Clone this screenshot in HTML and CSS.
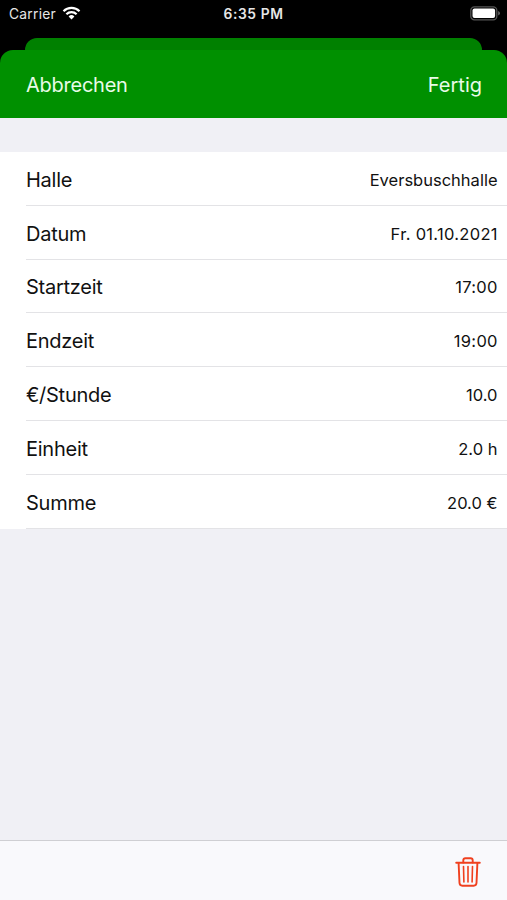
FILE: index.html
```
<!DOCTYPE html>
<html lang="de">
<head>
    <meta charset="UTF-8">
    <meta name="viewport" content="width=device-width, initial-scale=1">
    <title>Halle</title>
    <link rel="stylesheet" href="styles.css">
</head>
<body>

    <div class="statusbar">
        <div class="carrier">
            <span>Carrier</span>
            <svg class="wifi" viewBox="0 0 18 14" width="19" height="14">
                <path d="M1 5.2 A11.3 11.3 0 0 1 17 5.2" />
                <path d="M3.9 8.2 A7.2 7.2 0 0 1 14.1 8.2" />
                <path class="dot" d="M9 13.4 L6.1 10.4 A4.1 4.1 0 0 1 11.9 10.4 Z" />
            </svg>
        </div>
        <span class="clock">6:35 PM</span>
        <svg class="battery" viewBox="0 0 31 15" width="31" height="15">
            <rect class="case" x="0.8" y="0.8" width="26" height="13" rx="3.6" />
            <rect class="level" x="2.5" y="2.5" width="22.6" height="9.6" rx="2" />
            <path class="tip" d="M28.2 5 Q30 5.8 30 7.3 Q30 8.8 28.2 9.6 Z" />
        </svg>
    </div>

    <div class="sheet-behind"></div>

    <div class="sheet">
        <div class="navbar">
            <span class="cancel">Abbrechen</span>
            <span class="done">Fertig</span>
        </div>

        <div class="content">
            <div class="list">
                <div class="row"><span class="label">Halle</span><span class="value">Eversbuschhalle</span></div>
                <div class="row"><span class="label">Datum</span><span class="value zeit">Fr. 01.10.2021</span></div>
                <div class="row"><span class="label">Startzeit</span><span class="value zeit">17:00</span></div>
                <div class="row"><span class="label">Endzeit</span><span class="value zeit">19:00</span></div>
                <div class="row"><span class="label">€/Stunde</span><span class="value">10.0</span></div>
                <div class="row"><span class="label">Einheit</span><span class="value">2.0 h</span></div>
                <div class="row"><span class="label">Summe</span><span class="value">20.0 €</span></div>
            </div>
        </div>

        <div class="toolbar">
            <svg class="trash" viewBox="0 0 26 30" width="26" height="30">
                <path d="M1.2 5.7 H24.8" />
                <path d="M8.3 5.5 V3.3 Q8.3 1.2 10.4 1.2 H15.6 Q17.7 1.2 17.7 3.3 V5.5" />
                <path d="M3.6 5.9 L4.5 26 Q4.7 28.7 7.3 28.7 H18.7 Q21.3 28.7 21.5 26 L22.4 5.9" />
                <path class="slats" d="M8.5 9.5 L8.9 25 M13 9.5 V25 M17.5 9.5 L17.1 25" />
            </svg>
        </div>
    </div>

</body>
</html>
```
FILE: styles.css
```
* {
    box-sizing: border-box;
}
body {
    margin: 0;
    height: 900px;
    display: flex;
    flex-direction: column;
    overflow: hidden;
    background: #000;
    color: #111;
    font-family: Inter, "Liberation Sans", sans-serif;
}
.statusbar {
    flex: none;
    height: 38px;
    padding: 5px 6px 0 9px;
    display: grid;
    grid-template-columns: 1fr auto 1fr;
    align-items: start;
    color: #e6e6e6;
}
.carrier {
    display: flex;
    gap: 6px;
    font-size: 13.8px;
    line-height: 18px;
    letter-spacing: 0.25px;
}
.wifi {
    margin-top: 1px;
    fill: none;
    stroke: #fff;
    stroke-width: 2.2;
}
.wifi .dot {
    fill: #fff;
    stroke: none;
}
.clock {
    margin-right: 3px;
    font-size: 13.8px;
    font-weight: 600;
    line-height: 18px;
    letter-spacing: 0.6px;
}
.battery {
    justify-self: end;
    margin-top: 1px;
}
.case {
    fill: none;
    stroke: #555;
    stroke-width: 1.3;
}
.level {
    fill: #fff;
}
.tip {
    fill: #666;
}
.sheet-behind {
    flex: none;
    height: 12px;
    margin: 0 25px;
    background: #008000;
    border-radius: 12px 12px 0 0;
}
.sheet {
    flex: 1;
    display: flex;
    flex-direction: column;
}
.navbar {
    height: 68px;
    padding: 1px 25px 0 26px;
    display: flex;
    justify-content: space-between;
    align-items: center;
    background: #009000;
    border-radius: 13px 13px 0 0;
    color: #e8fbe8;
    font-size: 20px;
}
.cancel {
    letter-spacing: -0.25px;
}
.content {
    flex: 1;
    padding-top: 34px;
    background: #f0f0f5;
}
.list {
    background: #fff;
}
.row {
    height: 53.8px;
    margin-left: 26px;
    padding: 3px 9.5px 0 0;
    display: flex;
    justify-content: space-between;
    align-items: center;
    border-bottom: 1px solid #e3e3e6;
}
.label {
    font-size: 20px;
    letter-spacing: -0.25px;
}
.value {
    font-size: 16.5px;
}
.zeit {
    letter-spacing: 0.3px;
    margin-right: -0.3px;
}
.toolbar {
    height: 60px;
    padding: 16px 26px 0 0;
    display: flex;
    justify-content: flex-end;
    align-items: flex-start;
    background: #f9f9fc;
    border-top: 1px solid #cfcfd3;
}
.trash {
    fill: none;
    stroke: #f0401f;
    stroke-width: 1.9;
    stroke-linecap: round;
}
.slats {
    stroke-width: 1.6;
}
```
